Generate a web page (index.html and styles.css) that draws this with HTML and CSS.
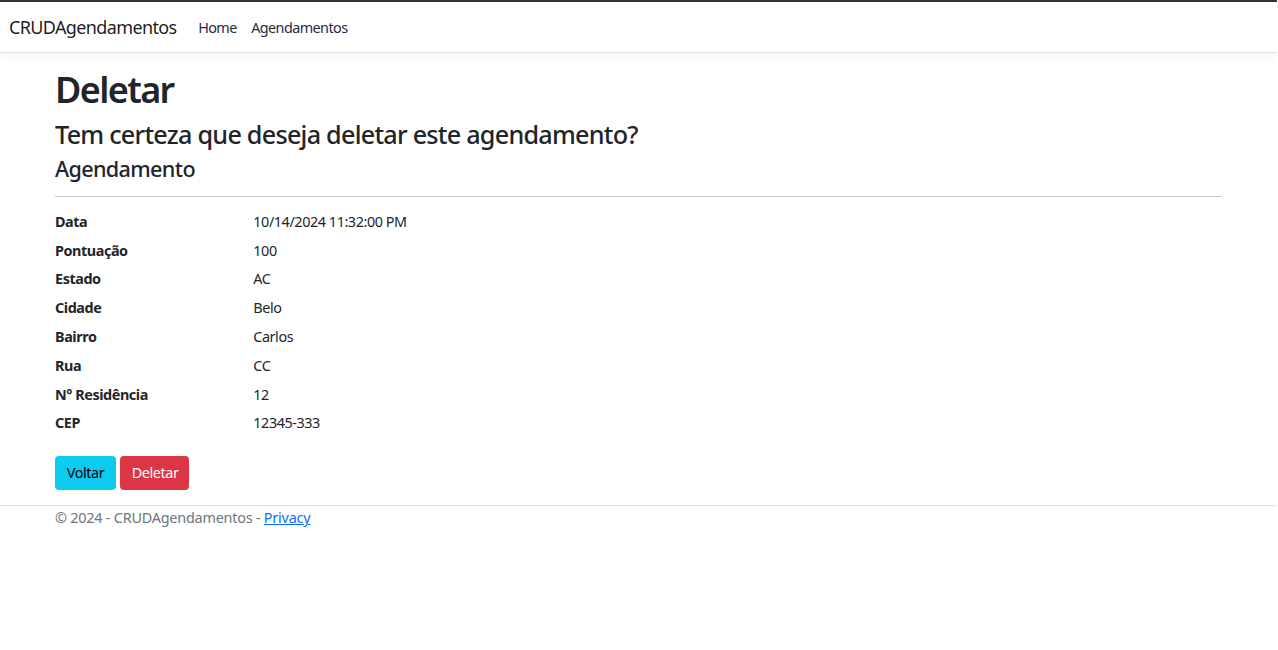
FILE: index.html
```html
<!DOCTYPE html>
<html lang="pt-br">
<head>
<meta charset="utf-8">
<title>Deletar - CRUDAgendamentos</title>
<link rel="stylesheet" href="styles.css">
</head>
<body>
<header class="topbar">
  <nav class="navbar">
    <a class="brand" href="#">CRUDAgendamentos</a>
    <ul class="nav-links">
      <li><a class="nav-link" href="#">Home</a></li>
      <li><a class="nav-link" href="#">Agendamentos</a></li>
    </ul>
  </nav>
</header>
<div class="container">
  <main class="main">
    <h1 class="title">Deletar</h1>
    <h3 class="question">Tem certeza que deseja deletar este agendamento?</h3>
    <div>
      <h4 class="subtitle">Agendamento</h4>
      <hr class="divider">
      <dl class="details">
        <dt>Data</dt><dd>10/14/2024 11:32:00 PM</dd>
        <dt>Pontuação</dt><dd>100</dd>
        <dt>Estado</dt><dd>AC</dd>
        <dt>Cidade</dt><dd>Belo</dd>
        <dt>Bairro</dt><dd>Carlos</dd>
        <dt>Rua</dt><dd>CC</dd>
        <dt>N° Residência</dt><dd>12</dd>
        <dt>CEP</dt><dd>12345-333</dd>
      </dl>
      <form class="actions">
        <a class="btn btn-info" href="#">Voltar</a>
        <button type="button" class="btn btn-danger">Deletar</button>
      </form>
    </div>
  </main>
</div>
<footer class="footer">
  <div class="container">
    &copy; 2024 - CRUDAgendamentos - <a class="footer-link" href="#">Privacy</a>
  </div>
</footer>
</body>
</html>
```
FILE: styles.css
```css
* { box-sizing: border-box; }
html, body { margin: 0; padding: 0; }
body {
  font-family: "Noto Sans", "Open Sans", sans-serif;
  font-size: 14.4px;
  line-height: 1.5;
  letter-spacing: -0.03em;
  color: #212529;
  background: #fff;
  border-top: 2px solid #333;
  margin-right: 1px;
}
a { text-decoration: none; }

.topbar {
  border-bottom: 1px solid #dee2e6;
  box-shadow: 0 3.6px 10.8px rgba(0,0,0,0.05);
  margin-bottom: 14.4px;
}
.navbar {
  display: flex;
  align-items: center;
  padding: 7.2px 9px;
  height: 50px;
}
.brand {
  font-size: 18px;
  letter-spacing: -0.035em;
  color: rgba(0,0,0,0.9);
  margin-right: 14.4px;
  line-height: 27px;
  padding-top: 1px;
}
.nav-links {
  display: flex;
  list-style: none;
  margin: 0;
  padding: 0;
}
.nav-link {
  display: block;
  padding: 8px 7.2px 7px;
  color: #1f2a44;
  font-size: 14.4px;
  letter-spacing: -0.04em;
}

.container {
  width: 1191px;
  margin: 0 auto;
  padding: 0 12px;
}
.main { padding-bottom: 14.4px; }

.title {
  font-size: 36px;
  font-weight: 600;
  letter-spacing: -0.045em;
  line-height: 1.2;
  margin: 0 0 7.2px;
  padding-top: 0.8px;
}
.question {
  font-size: 25.2px;
  font-weight: 500;
  letter-spacing: -0.03em;
  line-height: 1.2;
  margin: 0 0 7.2px;
}
.subtitle {
  font-size: 21.6px;
  font-weight: 500;
  letter-spacing: -0.03em;
  line-height: 1.2;
  margin: 0 0 7.2px;
}
.divider {
  border: 0;
  border-top: 1px solid #c8c9ca;
  margin: 14.4px 0 13.6px;
}
.details {
  display: grid;
  grid-template-columns: 198.3px 1fr;
  margin: 0 0 14.4px;
}
.details dt {
  font-weight: 700;
  margin: 0 0 7.2px;
}
.details dd {
  margin: 0 0 7.2px;
}

.actions {
  display: flex;
  gap: 4px;
}
.btn {
  display: inline-block;
  font-family: inherit;
  font-size: 14.4px;
  letter-spacing: -0.03em;
  line-height: 1.5;
  padding: 5.4px 10.8px;
  border: 1px solid transparent;
  border-radius: 3.4px;
  cursor: pointer;
}
.btn-info { background: #0dcaf0; border-color: #0dcaf0; color: #000; }
.btn-danger { background: #dc3545; border-color: #dc3545; color: #fff; padding-right: 10px; }

.footer {
  border-top: 1px solid #dee2e6;
  color: #6c757d;
  line-height: 24px;
  letter-spacing: -0.015em;
  margin-top: 0.6px;
}
.footer-link { color: #0d6efd; text-decoration: underline; }
```
